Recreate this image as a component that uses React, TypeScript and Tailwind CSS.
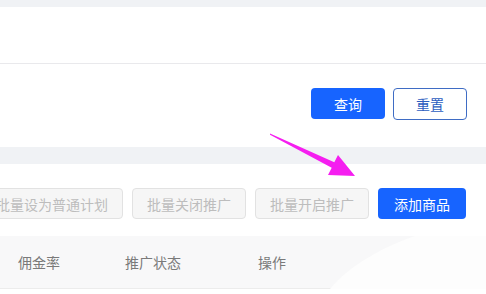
import React from 'react';

const font = { fontFamily: '"Noto Sans CJK SC", "Noto Sans", sans-serif' };

const BatchButton: React.FC<{ label: string; className?: string }> = ({ label, className }) => (
    <button
        disabled
        className={`h-[31px] shrink-0 rounded-[4px] border border-[#e2e2e2] bg-[#f6f6f6] px-[14px] text-[14px] leading-none text-[#bdbdbd] ${className ?? ''}`}
    >
        {label}
    </button>
);

export default function App() {
    return (
        <div className="relative h-[294px] w-[486px] overflow-hidden bg-[#f0f2f5]" style={font}>
            <div className="h-[7px]" />

            {/* search card */}
            <div className="h-[140px] bg-white">
                <div className="h-[57px] border-b border-[#e9e9ec]" />
                <div className="flex justify-end gap-[8px] pr-[19px] pt-[24px]">
                    <button className="h-[31px] w-[74px] rounded-[4px] bg-[#1764ff] text-[14px] leading-none text-white">
                        查询
                    </button>
                    <button className="h-[32px] w-[74px] rounded-[4px] border border-[#3f6cc4] bg-white text-[14px] leading-none text-[#2c5dbf]">
                        重置
                    </button>
                </div>
            </div>

            <div className="h-[17px]" />

            {/* list card */}
            <div className="h-[130px] bg-white">
                <div className="flex justify-end gap-[9px] pr-[20px] pt-[24px]">
                    <BatchButton label="批量设为普通计划" />
                    <BatchButton label="批量关闭推广" />
                    <BatchButton label="批量开启推广" />
                    <button className="h-[31px] shrink-0 rounded-[4px] bg-[#1764ff] px-[16px] text-[14px] leading-none text-white">
                        添加商品
                    </button>
                </div>
                <div className="mt-[17px] flex h-[53px] items-center border-b border-[#ececec] bg-[#f8f8f9] pl-[18px] text-[14px] text-[#7a7a7a]">
                    <div className="w-[107px]">佣金率</div>
                    <div className="w-[133px]">推广状态</div>
                    <div>操作</div>
                </div>
            </div>

            {/* white smudge over the header's right end */}
            <svg className="absolute left-0 top-0" width="486" height="294" viewBox="0 0 486 294">
                <path d="M486 236 L415 236 C385 246 348 266 330 289 L486 289 Z" fill="#fdfdfd" />
            </svg>

            {/* annotation arrow */}
            <svg className="absolute left-0 top-0" width="486" height="294" viewBox="0 0 486 294">
                <polygon
                    points="270,133.5 334.3,162.3 338,155 355,176 328,175 331.7,167.7 270,134.8"
                    fill="#f51ef0"
                />
            </svg>
        </div>
    );
}
